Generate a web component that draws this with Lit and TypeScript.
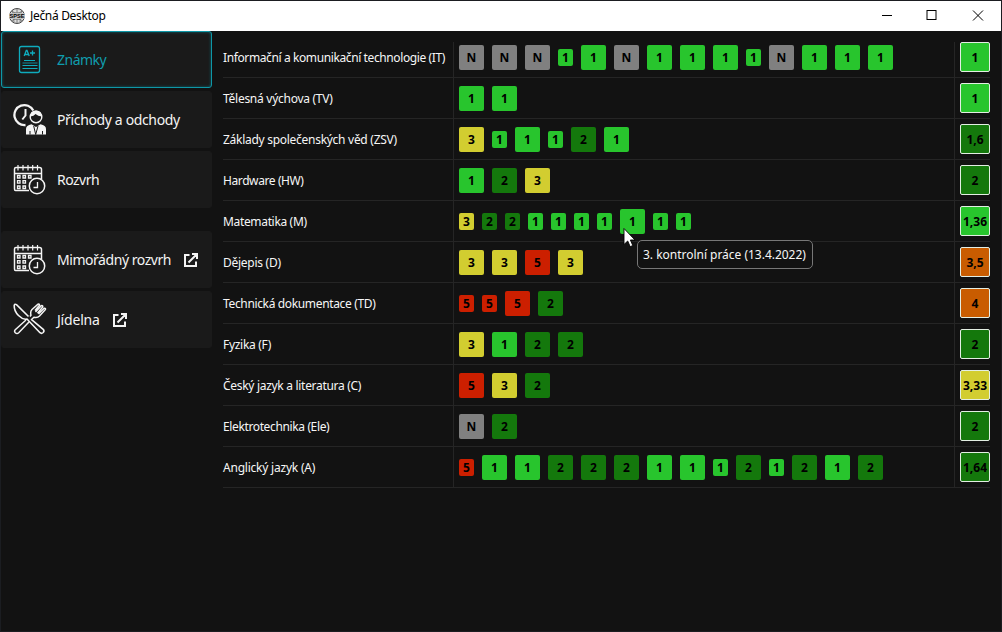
import { LitElement, html, css, svg, nothing } from "lit";
import { customElement, property } from "lit/decorators.js";

type Row = { name: string; marks: string; avg: string; tone: string; track: number };

/* Marks: a trailing "s" means a small-weight mark. */
const ROWS: Row[] = [
  { name: "Informační a komunikační technologie (IT)", marks: "N N N 1s 1 N 1 1 1 1s N 1 1 1", avg: "1", tone: "1", track: -0.39 },
  { name: "Tělesná výchova (TV)", marks: "1 1", avg: "1", tone: "1", track: -0.27 },
  { name: "Základy společenských věd (ZSV)", marks: "3 1s 1 1s 2 1", avg: "1,6", tone: "2", track: -0.28 },
  { name: "Hardware (HW)", marks: "1 2 3", avg: "2", tone: "2", track: -0.4 },
  { name: "Matematika (M)", marks: "3s 2s 2s 1s 1s 1s 1s 1 1s 1s", avg: "1,36", tone: "1", track: -0.34 },
  { name: "Dějepis (D)", marks: "3 3 5 3", avg: "3,5", tone: "4", track: -0.27 },
  { name: "Technická dokumentace (TD)", marks: "5s 5s 5 2", avg: "4", tone: "4", track: -0.35 },
  { name: "Fyzika (F)", marks: "3 1 2 2", avg: "2", tone: "2", track: -0.3 },
  { name: "Český jazyk a literatura (C)", marks: "5 3 2", avg: "3,33", tone: "3", track: -0.3 },
  { name: "Elektrotechnika (Ele)", marks: "N 2", avg: "2", tone: "2", track: -0.37 },
  { name: "Anglický jazyk (A)", marks: "5s 1 1 2 2 2 1 1 1s 2 1s 2 1 2", avg: "1,64", tone: "2", track: -0.22 },
];

const calendar = svg`
  <path d="M16 28.500H2.500Q1.500 28.500 1.500 27V7Q1.500 5.500 3 5.500H26.500Q28.500 5.500 28.500 7.500V17M1.500 11.500H28.500" />
  <path d="M5 3V8.500M10 3V8.500M15 3V8.500M19.700 3V8.500M24.500 3V8.500" stroke-width="1.200" />
  <path d="M4.500 13.500h2.500v2.500h-2.500zM10 13.500h2.500v2.500h-2.500zM15.500 13.500h2.500v2.500h-2.500zM4.500 18.700h2.500v2.500h-2.500zM10 18.700h2.500v2.500h-2.500zM4.500 24h2.500v2.500h-2.500zM10 24h2.500v2.500h-2.500z" stroke-width="1.300" />
  <circle cx="24" cy="24" r="7.700" fill="#1a1a1a" />
  <path d="M24.500 20V25.500H20.500" stroke-width="1.300" />`;

const ICONS: Record<string, unknown> = {
  marks: svg`
    <rect x="6.500" y="4.500" width="20" height="26" rx="2" stroke-width="1.300" />
    <path d="M11.200 14L13.300 8.500H14L16.200 14M12.200 12.500H15.500M17 11H22M19.500 8.500V13.500" stroke-width="1.300" />
    <path d="M11 18.500H22M9.500 23.500H24.500M9.500 26.500H24.500" stroke-width="1.200" />
    <path d="M9.500 21H24.500" stroke-width="1.500" opacity=".5" />`,
  attendance: svg`
    <path d="M12.500 23A10 10 0 1 1 20.300 8.500" stroke-width="2.300" />
    <path d="M12.500 7V13.500L9.300 17.500" stroke-width="2" />
    <circle cx="23" cy="15" r="5.800" fill="#1a1a1a" stroke-width="1.400" />
    <path d="M17.300 14.500Q17 8.700 23 8.500Q29 8.700 28.700 14.500Q25 14 22.500 12Q21 14 17.300 14.500Z" fill="currentColor" stroke="none" />
    <path d="M13 32.500V27Q13 23.500 18.500 22.300L23 25L27.500 22.300Q33 23.500 33 27V32.500Z" fill="currentColor" stroke="none" />
    <path d="M20.700 24L22.700 32.500L25 24M17 29V32.500M29.500 29V32.500" stroke="#1a1a1a" stroke-width="1" />`,
  calendar,
  dining: svg`
    <path d="M15.500 14.500L3.500 2.700Q1.500 1.500 1.200 3.500Q1 9 5.500 13.500Q9 17 12.500 17.200L14 17L27 30.700Q28.500 32 30.200 30.500Q31.700 29 30.200 27.300L18 17.200" stroke-width="1.600" />
    <path d="M13 18L2.500 27.500Q0.800 29 2.300 30.700Q4 32.200 5.700 30.700L16.200 19.700M17 14.500L18 13.200Q17 9.500 19 7.500L25 2.200Q26.500 1.500 26.500 3.200L22 8.500M22.500 10L28.300 3.700Q30 3.200 29.700 5L24.500 11.200M25.500 12L31.200 6.300Q33 6 32.300 7.700L26.500 14Q24.500 16 21 15.200L19 17" stroke-width="1.500" />`,
};

@customElement("nav-item")
class NavItem extends LitElement {
  @property() icon = "";
  @property() label = "";
  @property({ type: Boolean, reflect: true }) active = false;
  @property({ type: Boolean }) external = false;
  @property({ type: Number }) track = 0;

  static styles = css`
    :host { display: flex; align-items: center; box-sizing: border-box; height: 57px; padding-left: 11px;
      background: #1a1a1a; border: 1px solid #1a1a1a; border-radius: 3px; color: #f4f4f4;
      font: 14px/20px "Noto Sans", "Open Sans", sans-serif; }
    :host([active]) { border-color: #0e97a7; color: #0fabbd; box-shadow: inset 0 0 3px #0d6570; }
    .icon { width: 35px; height: 35px; margin-right: 8px; flex: none; fill: none; stroke: currentColor; stroke-width: 1.5; }
    .label { white-space: nowrap; padding: 1px 0 0 1px; }
    :host([active]) .label { color: #109dad; }
    .ext { width: 16px; height: 16px; margin-left: 12px; fill: none; stroke: currentColor; stroke-width: 2; }
  `;

  render() {
    return html`<svg class="icon" viewBox="0 0 35 35">${ICONS[this.icon]}</svg>
      <span class="label" style="letter-spacing:${this.track}px">${this.label}</span>
      ${this.external
        ? html`<svg class="ext" viewBox="0 0 16 16"><path d="M6.500 3H2V14H13V9.500M5.500 10.500L13.500 2.500M9 2H14V7" /></svg>`
        : nothing}`;
  }
}

@customElement("app-root")
class AppRoot extends LitElement {
  static styles = css`
    :host { display: flex; flex-direction: column; box-sizing: border-box; width: 1002px; height: 632px;
      border: 1px solid #1b1d21; background: #121212; color: #f6f6f6; overflow: hidden; position: relative;
      font: 12px/16px "Noto Sans", "Open Sans", sans-serif; }
    .titlebar { display: flex; align-items: center; height: 30px; flex: none; background: #fff; color: #000; }
    .logo { width: 18px; height: 18px; margin: 0 4px 0 7px; overflow: visible; }
    .logo-text { font: bold 6px "Liberation Sans", sans-serif; }
    .title { flex: 1; letter-spacing: -0.32px; }
    .controls { display: flex; }
    .control { width: 45.500px; height: 30px; fill: none; stroke: #000; stroke-width: 1; }
    .body { display: flex; flex: 1; }
    .nav { display: flex; flex-direction: column; width: 211px; gap: 3px; }
    .space { height: 17px; }
    .table { width: 767px; margin: 11px 0 0 11px; }
    .row { display: grid; grid-template-columns: 230px 501px 36px; height: 41px; box-sizing: border-box; border-bottom: 1px solid #252525; }
    .row:first-child { height: 36px; }
    .name, .marks, .avg-cell { display: flex; align-items: center; padding-top: 5px; padding-bottom: 5px; }
    .row:first-child > * { padding-top: 0; }
    .name { white-space: nowrap; }
    .name span { padding-top: 2px; }
    .marks, .avg-cell { border-left: 1px solid #252525; padding-left: 5px; gap: 8px; }
    .mark, .avg { display: flex; align-items: center; justify-content: center; box-sizing: border-box; width: 25px; height: 25px;
      border-radius: 2px; color: #000; font-weight: 700; padding-top: 1px; }
    .small { width: 15px; height: 17px; }
    .avg { width: 30px; height: 30px; flex: none; border: 1px solid #e3eee3; padding-top: 2px; }
    .tN { background: #808080; }
    .t1 { background: #28c52d; }
    .t2 { background: #14780c; }
    .t3 { background: #d2cd30; }
    .t4 { background: #c95c00; }
    .t5 { background: #cc1f00; }
    .tooltip { position: absolute; left: 636px; top: 239px; box-sizing: border-box; width: 176px; height: 29px;
      border: 1px solid #777; border-radius: 5px; background: #121212; padding: 6px 5px; white-space: nowrap; letter-spacing: -0.02px; }
    .cursor { position: absolute; left: 621px; top: 226px; width: 14px; height: 21px; }
  `;

  private mark(code: string) {
    const value = code[0];
    return html`<span class="mark t${value} ${code.length > 1 ? "small" : ""}">${value}</span>`;
  }

  render() {
    return html`
      <header class="titlebar">
        <svg class="logo" viewBox="0 0 18 18">
          <circle cx="9" cy="9" r="7.500" fill="#ddd" stroke="#444" />
          <path d="M9 1.500V16.500M3 4Q9 8 15 4M3 14Q9 10 15 14M4.500 3L6 15M13.500 3L12 15" fill="none" stroke="#666" stroke-width=".8" />
          <rect x="1" y="6" width="16" height="6" fill="#c4c4c4" />
          <text class="logo-text" x="1.500" y="11.200" textLength="15" lengthAdjust="spacingAndGlyphs">SPSE</text>
        </svg>
        <span class="title">Ječná Desktop</span>
        <div class="controls">
          <svg class="control" viewBox="0 0 45.500 30"><path d="M17 14.500H27" /></svg>
          <svg class="control" viewBox="0 0 45.500 30"><rect x="17" y="9.500" width="9" height="9" /></svg>
          <svg class="control" viewBox="0 0 45.500 30"><path d="M17 9.500L27 19.500M27 9.500L17 19.500" /></svg>
        </div>
      </header>
      <div class="body">
        <nav class="nav">
          <nav-item icon="marks" label="Známky" active track="-0.5"></nav-item>
          <nav-item icon="attendance" label="Příchody a odchody" track="-0.36"></nav-item>
          <nav-item icon="calendar" label="Rozvrh" track="-0.5"></nav-item>
          <div class="space"></div>
          <nav-item icon="calendar" label="Mimořádný rozvrh" external track="-0.45"></nav-item>
          <nav-item icon="dining" label="Jídelna" external track="-0.2"></nav-item>
        </nav>
        <main class="table">
          ${ROWS.map((r) => html`<div class="row">
            <div class="name"><span style="letter-spacing:${r.track}px">${r.name}</span></div>
            <div class="marks">${r.marks.split(" ").map((m) => this.mark(m))}</div>
            <div class="avg-cell"><span class="avg t${r.tone}">${r.avg}</span></div>
          </div>`)}
        </main>
      </div>
      <div class="tooltip">3. kontrolní práce (13.4.2022)</div>
      <svg class="cursor" viewBox="0 0 14 21"><path d="M2 1.500V17.500L5.700 14L8.200 19.700L10.800 18.500L8.400 13H13Z" fill="#fff" stroke="#000" stroke-width=".9" /></svg>
    `;
  }
}
